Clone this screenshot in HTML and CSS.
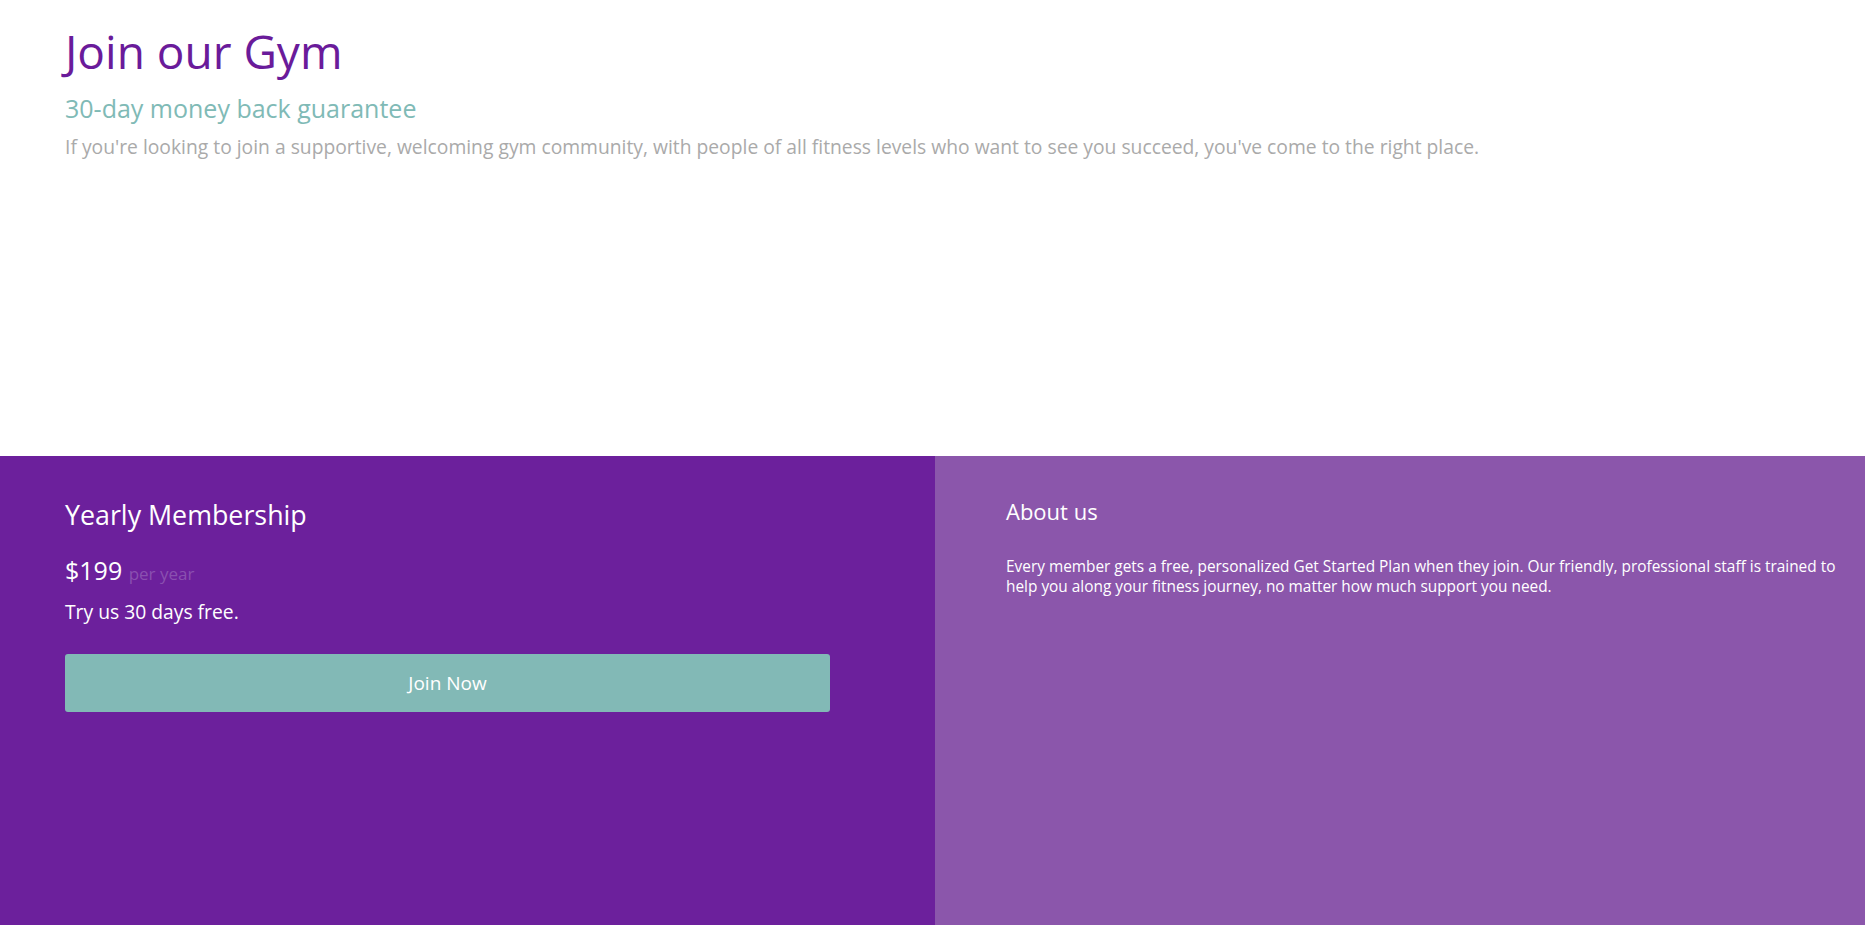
FILE: index.html
```html
<!DOCTYPE html>
<html lang="en">
<head>
<meta charset="utf-8">
<title>Join our Gym</title>
<link rel="stylesheet" href="styles.css">
</head>
<body>
<section class="intro">
  <h1 class="title">Join our Gym</h1>
  <h2 class="subtitle">30-day money back guarantee</h2>
  <p class="lead">If you're looking to join a supportive, welcoming gym community, with people of all fitness levels who want to see you succeed, you've come to the right place.</p>
</section>
<section class="panels">
  <div class="membership">
    <h3 class="plan-name">Yearly Membership</h3>
    <p class="price">$199 <span class="per">per year</span></p>
    <p class="trial">Try us 30 days free.</p>
    <a class="join-btn" href="#">Join Now</a>
  </div>
  <div class="about">
    <h3 class="about-title">About us</h3>
    <p class="about-text">Every member gets a free, personalized Get Started Plan when they join. Our friendly, professional staff is trained to help you along your fitness journey, no matter how much support you need.</p>
  </div>
</section>
</body>
</html>
```
FILE: styles.css
```css
html, body {
  margin: 0;
  padding: 0;
}
body {
  font-family: "Open Sans", "Noto Sans", sans-serif;
  background: #ffffff;
  height: 925px;
  overflow: hidden;
}
.intro {
  box-sizing: border-box;
  height: 456px;
  padding: 23px 65px 0;
}
.title {
  margin: 0;
  font-size: 46px;
  line-height: 56px;
  font-weight: 400;
  color: #6a1b9a;
}
.subtitle {
  margin: 14px 0 0;
  font-size: 25px;
  line-height: 30px;
  font-weight: 400;
  color: #80bab6;
}
.lead {
  margin: 11px 0 0;
  font-size: 19.3px;
  line-height: 26px;
  color: #aaaaaa;
}
.panels {
  display: grid;
  grid-template-columns: 935px 1fr;
  height: 469px;
}
.membership {
  background: #6c209c;
  padding: 43px 105px 0 65px;
  color: #ffffff;
}
.plan-name {
  margin: 0;
  font-size: 26.8px;
  line-height: 32px;
  font-weight: 400;
}
.price {
  margin: 23px 0 0;
  font-size: 25px;
  line-height: 32px;
}
.per {
  font-size: 17px;
  color: #8a50b0;
}
.trial {
  margin: 9px 0 0;
  font-size: 19.3px;
  line-height: 26px;
}
.join-btn {
  display: flex;
  align-items: center;
  justify-content: center;
  margin-top: 29px;
  height: 58px;
  border-radius: 3px;
  background: #82b9b6;
  color: #ffffff;
  font-size: 19px;
  text-decoration: none;
}
.about {
  background: #8b56ab;
  padding: 40px 20px 0 71px;
  color: #ffffff;
}
.about-title {
  margin: 0;
  font-size: 22px;
  line-height: 30px;
  font-weight: 400;
}
.about-text {
  margin: 31px 0 0;
  font-size: 15.4px;
  line-height: 20px;
}
```
